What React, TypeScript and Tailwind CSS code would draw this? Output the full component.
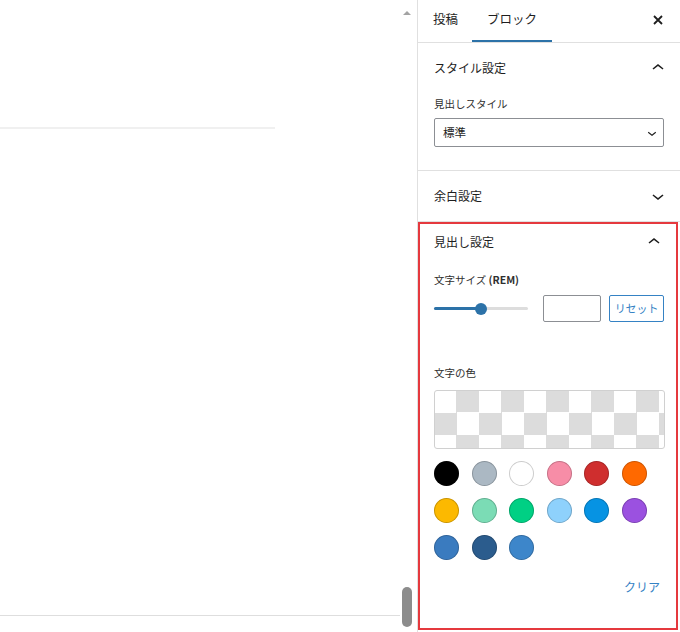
import React from "react";

const font = { fontFamily: '"Noto Sans CJK JP", "Noto Sans", sans-serif' };

function ChevronUp() {
  return (
    <svg width="24" height="24" viewBox="0 0 24 24" className="fill-[#1e1e1e]">
      <path d="M6.5 12.4L12 8l5.5 4.4-.9 1.2L12 10l-4.5 3.6-1-1.2z" />
    </svg>
  );
}

function ChevronDown({ size = 24 }: { size?: number }) {
  return (
    <svg width={size} height={size} viewBox="0 0 24 24" className="fill-[#1e1e1e]">
      <path d="M17.5 11.6L12 16l-5.5-4.4.9-1.2L12 14l4.5-3.6 1 1.2z" />
    </svg>
  );
}

const swatches = [
  "#000000",
  "#abb8c3",
  "#ffffff",
  "#f78da7",
  "#cf2e2e",
  "#ff6900",
  "#fcb900",
  "#7bdcb5",
  "#00d084",
  "#8ed1fc",
  "#0693e3",
  "#9b51e0",
  "#3a7bbf",
  "#2b5c8d",
  "#3d86ca",
];

export default function App() {
  return (
    <div className="flex h-[632px] w-[680px] overflow-hidden bg-white text-[#1e1e1e]" style={font}>
      {/* editor canvas */}
      <div className="flex w-[398px] flex-col">
        <div className="h-[127px]" />
        <div className="h-[2px] w-[275px] bg-[#f0f0f0]" />
        <div className="flex-1" />
        <div className="mb-[16px] h-[1px] w-[400px] bg-[#dedede]" />
      </div>

      {/* scrollbar */}
      <div className="flex w-[19px] flex-col items-center">
        <div className="mt-[11px] ml-[-2px] h-0 w-0 border-x-[4px] border-b-[4px] border-x-transparent border-b-[#a3a3a3]" />
        <div className="flex-1" />
        <div className="mb-[5px] ml-[-2px] h-[40px] w-[10px] rounded-full bg-[#8c8c8c]" />
      </div>

      {/* sidebar */}
      <div className="flex w-[263px] flex-col border-l border-[#e0e0e0]">
        <div className="flex h-[43px] items-center border-b border-[#e0e0e0] pl-[15px] pr-[17px] text-[12.5px]">
          <div className="pb-[3px]">投稿</div>
          <div className="relative ml-[14px] flex h-full w-[80px] items-center justify-center pb-[3px]">
            ブロック
            <div className="absolute bottom-[0px] left-0 h-[2.5px] w-full bg-[#2c72a8]" />
          </div>
          <div className="flex-1" />
          <svg width="10" height="10" viewBox="0 0 10 10" className="mb-[3px] stroke-[#1e1e1e]">
            <path d="M1 1L9 9M9 1L1 9" strokeWidth="1.8" />
          </svg>
        </div>

        {/* スタイル設定 */}
        <div className="border-b border-[#e0e0e0] px-[16px]">
          <div className="flex h-[50px] items-center justify-between text-[12px]">
            <span>スタイル設定</span>
            <span className="mr-[-6px]">
              <ChevronUp />
            </span>
          </div>
          <div className="mt-[4px] text-[10.5px] leading-[14px] text-[#2f2f2f]">見出しスタイル</div>
          <div className="mt-[7px] mb-[23px] flex h-[29px] items-center justify-between rounded-[2px] border border-[#8c8f94] pl-[8px] pr-[2px] text-[11.5px]">
            <span>標準</span>
            <ChevronDown size={18} />
          </div>
        </div>

        {/* 余白設定 */}
        <div className="border-b border-[#e0e0e0] px-[16px]">
          <div className="flex h-[50px] items-center justify-between text-[12px]">
            <span>余白設定</span>
            <span className="mr-[-6px]">
              <ChevronDown />
            </span>
          </div>
        </div>

        {/* 見出し設定 */}
        <div className="mr-[2px] flex h-[408px] flex-col border-2 border-[#e5393e] pl-[14px] pr-[12px]">
          <div className="flex h-[36px] items-center justify-between text-[12px]">
            <span>見出し設定</span>
            <span className="mr-[-2px]">
              <ChevronUp />
            </span>
          </div>
          <div className="mt-[13px] text-[10.5px] leading-[14px] text-[#2f2f2f]">
            文字サイズ <span className="font-semibold">(REM)</span>
          </div>
          <div className="mt-[8px] flex h-[27px] items-center">
            <div className="relative h-[3px] w-[94px] rounded-full bg-[#dddddd]">
              <div className="absolute left-0 top-0 h-[3px] w-[47px] rounded-full bg-[#2c72a8]" />
              <div className="absolute left-[41px] top-[-4.5px] h-[12px] w-[12px] rounded-full bg-[#2c72a8]" />
            </div>
            <div className="ml-[15px] h-[27px] w-[59px] rounded-[2px] border border-[#8c8f94]" />
            <div className="ml-[8px] flex h-[27px] w-[55px] items-center justify-center rounded-[2px] border border-[#3582c4] text-[11px] text-[#3582c4]">
              リセット
            </div>
          </div>
          <div className="mt-[44px] text-[10.5px] leading-[14px] text-[#2f2f2f]">文字の色</div>
          <div className="mt-[10px] h-[59px] w-[231px] overflow-hidden rounded-[3px] border border-[#d0d0d0] bg-[repeating-conic-gradient(#dcdcdc_0_25%,#ffffff_0_50%)] bg-[length:45px_45px] bg-[position:-1px_-1px]" />
          <div className="mt-[12px] grid w-[213px] grid-cols-6 gap-x-[12.6px] gap-y-[12px]">
            {swatches.map((c, i) => (
              <div
                key={i}
                className="h-[25px] w-[25px] rounded-full shadow-[inset_0_0_0_1px_rgba(0,0,0,0.2)]"
                style={{ backgroundColor: c }}
              />
            ))}
          </div>
          <div className="mt-[19px] flex justify-end pr-[4px] text-[12px] leading-[16px] text-[#3582c4]">クリア</div>
        </div>
      </div>
    </div>
  );
}
